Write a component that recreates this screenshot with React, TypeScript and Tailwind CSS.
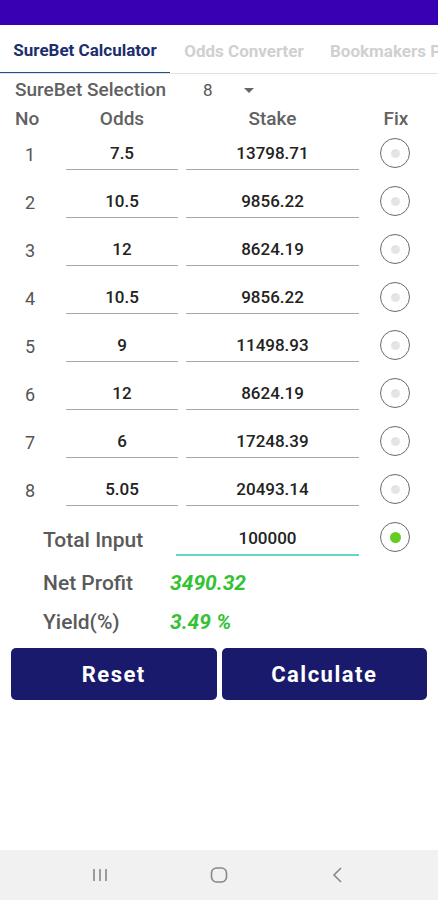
import { useState } from "react"

const rows = [
  { no: 1, odds: "7.5", stake: "13798.71" },
  { no: 2, odds: "10.5", stake: "9856.22" },
  { no: 3, odds: "12", stake: "8624.19" },
  { no: 4, odds: "10.5", stake: "9856.22" },
  { no: 5, odds: "9", stake: "11498.93" },
  { no: 6, odds: "12", stake: "8624.19" },
  { no: 7, odds: "6", stake: "17248.39" },
  { no: 8, odds: "5.05", stake: "20493.14" },
]

function Radio({ checked }: { checked?: boolean }) {
  return (
    <div className="w-[30px] h-[30px] rounded-full border-[1.5px] border-[#6a6a6a] flex items-center justify-center">
      {checked ? (
        <div className="w-[11px] h-[11px] rounded-full bg-[#66cc22]" />
      ) : (
        <div className="w-[9px] h-[9px] rounded-full bg-[#e4e4e4]" />
      )}
    </div>
  )
}

export default function App() {
  const [fixed] = useState<number | "total">("total")

  return (
    <div className="w-[438px] h-[900px] bg-white flex flex-col font-['Roboto',sans-serif] overflow-hidden">
      {/* status bar */}
      <div className="h-[25px] bg-[#3800b3] shrink-0" />

      {/* tabs */}
      <div className="h-[49px] flex border-b border-[#e2e2e2] shrink-0 whitespace-nowrap overflow-hidden">
        <div className="w-[170px] shrink-0 flex items-center justify-center pt-[5px] border-b-[2px] border-[#1f4f8f] text-[17px] font-bold text-[#1c2e6e] mb-[-1px]">
          SureBet Calculator
        </div>
        <div className="w-[148px] shrink-0 flex items-center justify-center pt-[5px] text-[17px] font-bold text-[#d0d0d0]">
          Odds Converter
        </div>
        <div className="w-[120px] shrink-0 overflow-hidden flex items-center pl-[12px] pt-[5px] text-[17px] font-bold text-[#d0d0d0]">
          Bookmakers Promo
        </div>
      </div>

      {/* selection */}
      <div className="h-[33px] flex items-center pl-[15px] text-[19px] font-medium text-[#616161] shrink-0">
        <span className="w-[188px]">SureBet Selection</span>
        <span className="text-[17px] font-normal text-[#555]">8</span>
        <svg className="ml-[31px]" width="10" height="6" viewBox="0 0 10 6">
          <path d="M0 0 L10 0 L5 5 Z" fill="#666" />
        </svg>
      </div>

      {/* header */}
      <div className="h-[24px] flex items-center text-[19px] font-medium text-[#616161] shrink-0">
        <span className="w-[66px] pl-[15px]">No</span>
        <span className="w-[112px] text-center">Odds</span>
        <span className="w-[8px]" />
        <span className="w-[173px] text-center">Stake</span>
        <span className="flex-1 text-center pr-[5px]">Fix</span>
      </div>

      {/* rows */}
      <div className="flex flex-col pt-[1px] shrink-0">
        {rows.map((r) => (
          <div key={r.no} className="h-[48px] flex items-start">
            <span className="w-[66px] pl-[25px] text-[18px] text-[#555] leading-[24px] pt-[11px]">{r.no}</span>
            <div className="w-[112px] h-[38px] border-b-[1.5px] border-[#a8a8a8] flex items-end justify-center pb-[3px] text-[17px] font-medium text-[#222]">
              {r.odds}
            </div>
            <span className="w-[8px]" />
            <div className="w-[173px] h-[38px] border-b-[1.5px] border-[#a8a8a8] flex items-end justify-center pb-[3px] text-[17px] font-medium text-[#222]">
              {r.stake}
            </div>
            <div className="flex-1 flex justify-center pt-[6px] pr-[7px]">
              <Radio checked={fixed === r.no} />
            </div>
          </div>
        ))}

        {/* total */}
        <div className="h-[48px] flex items-start">
          <span className="w-[176px] pl-[43px] text-[21px] font-medium text-[#5a5a5a] pt-[9px]">Total Input</span>
          <div className="w-[183px] h-[40px] border-b-[2px] border-[#5fd6c8] flex items-end justify-center pb-[3px] text-[17px] font-medium text-[#222]">
            100000
          </div>
          <div className="flex-1 flex justify-center pt-[6px] pr-[7px]">
            <Radio checked={fixed === "total"} />
          </div>
        </div>
      </div>

      {/* results */}
      <div className="flex flex-col pl-[43px] text-[21px] font-medium shrink-0">
        <div className="h-[40px] flex items-center">
          <span className="w-[127px] text-[#5a5a5a]">Net Profit</span>
          <span className="italic font-bold text-[#33c233]">3490.32</span>
        </div>
        <div className="h-[38px] flex items-center">
          <span className="w-[127px] text-[#5a5a5a]">Yield(%)</span>
          <span className="italic font-bold text-[#33c233]">3.49 %</span>
        </div>
      </div>

      {/* buttons */}
      <div className="flex gap-[5px] px-[11px] pt-[6px] shrink-0">
        <button className="flex-1 h-[52px] rounded-[5px] bg-[#1a1a6c] text-white text-[22px] font-bold tracking-[1.5px]">
          Reset
        </button>
        <button className="flex-1 h-[52px] rounded-[5px] bg-[#1a1a6c] text-white text-[22px] font-bold tracking-[1.5px]">
          Calculate
        </button>
      </div>

      <div className="flex-1" />

      {/* nav bar */}
      <div className="h-[50px] bg-[#f1f1f1] flex items-center justify-around px-[40px] shrink-0">
        <svg width="20" height="16" viewBox="0 0 20 16">
          <path d="M4 2 V14 M10 2 V14 M16 2 V14" stroke="#888" strokeWidth="1.6" />
        </svg>
        <svg width="20" height="20" viewBox="0 0 20 20">
          <rect x="2.5" y="3" width="15" height="14" rx="5" fill="none" stroke="#888" strokeWidth="1.6" />
        </svg>
        <svg width="20" height="20" viewBox="0 0 20 20">
          <path d="M13 3 L6 10 L13 17" fill="none" stroke="#888" strokeWidth="1.6" />
        </svg>
      </div>
    </div>
  )
}
